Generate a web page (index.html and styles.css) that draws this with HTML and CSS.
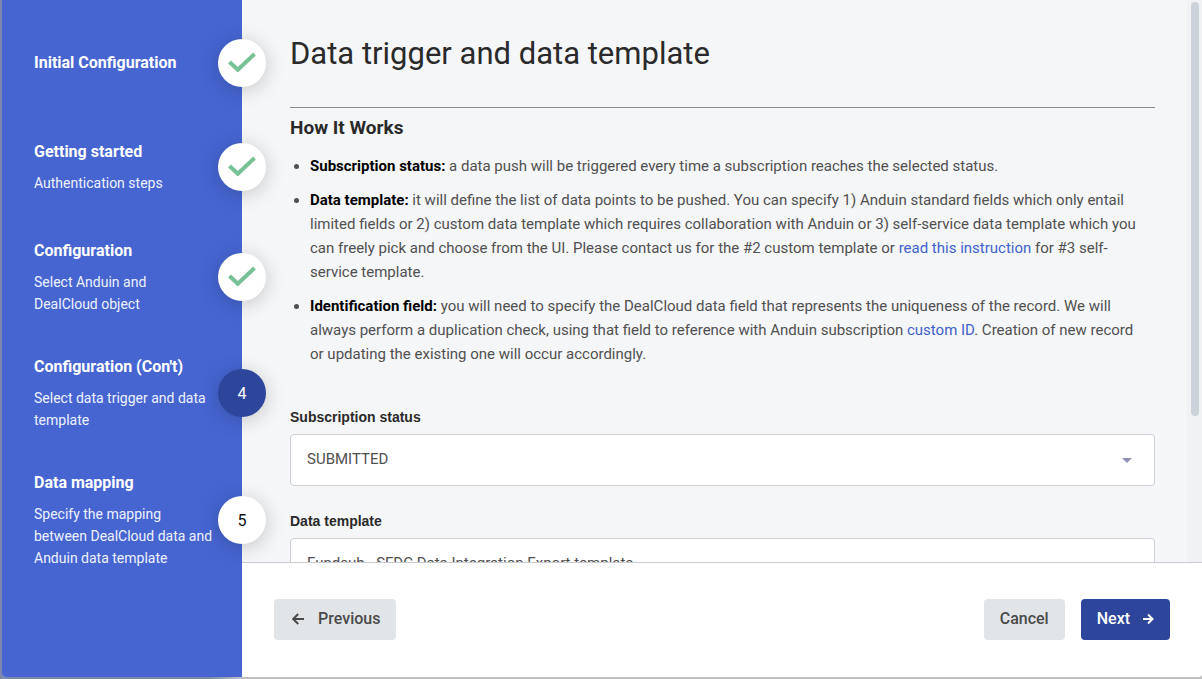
FILE: index.html
```html
<!DOCTYPE html>
<html lang="en">
<head>
<meta charset="utf-8">
<title>Data trigger and data template</title>
<link rel="stylesheet" href="styles.css">
</head>
<body>
<div class="wizard">
  <nav class="sidebar" aria-label="Setup steps">
    <ol class="steps">
      <li class="step">
        <div class="step-text"><h2 class="step-title">Initial Configuration</h2></div>
        <span class="badge"><svg class="check" viewBox="0 0 28 22" aria-label="Done"><path d="M1.500 10 9.800 17.700 26.500 2"/></svg></span>
      </li>
      <li class="step">
        <div class="step-text"><h2 class="step-title">Getting started</h2><p class="step-note">Authentication steps</p></div>
        <span class="badge"><svg class="check" viewBox="0 0 28 22" aria-label="Done"><path d="M1.500 10 9.800 17.700 26.500 2"/></svg></span>
      </li>
      <li class="step">
        <div class="step-text"><h2 class="step-title">Configuration</h2><p class="step-note">Select Anduin and<br>DealCloud object</p></div>
        <span class="badge"><svg class="check" viewBox="0 0 28 22" aria-label="Done"><path d="M1.500 10 9.800 17.700 26.500 2"/></svg></span>
      </li>
      <li class="step" aria-current="step">
        <div class="step-text"><h2 class="step-title">Configuration (Con't)</h2><p class="step-note">Select data trigger and data<br>template</p></div>
        <span class="badge badge-current">4</span>
      </li>
      <li class="step">
        <div class="step-text"><h2 class="step-title">Data mapping</h2><p class="step-note">Specify the mapping<br>between DealCloud data and<br>Anduin data template</p></div>
        <span class="badge">5</span>
      </li>
    </ol>
  </nav>
  <div class="panel">
    <div class="scroller">
      <main class="content">
        <h1 class="page-title">Data trigger and data template</h1>
        <hr class="rule">
        <h2 class="section-title">How It Works</h2>
        <ul class="notes">
          <li><strong>Subscription status:</strong> a data push will be triggered every time a subscription reaches the selected status.</li>
          <li><strong>Data template:</strong> it will define the list of data points to be pushed. You can specify 1) Anduin standard fields which only entail limited fields or 2) custom data template which requires collaboration with Anduin or 3) self-service data template which you can freely pick and choose from the UI. Please contact us for the #2 custom template or <a href="#instruction">read this instruction</a> for #3 self-service template.</li>
          <li><strong>Identification field:</strong> you will need to specify the DealCloud data field that represents the uniqueness of the record. We will always perform a duplication check, using that field to reference with Anduin subscription <a href="#custom-id">custom ID</a>. Creation of new record or updating the existing one will occur accordingly.</li>
        </ul>
        <div class="field">
          <label class="label" for="status">Subscription status</label>
          <div class="select-box">
            <select class="select" id="status"><option>SUBMITTED</option></select>
            <svg class="caret" viewBox="0 0 10 5" aria-hidden="true"><path d="M0 0h10L5 5z"/></svg>
          </div>
        </div>
        <div class="field">
          <label class="label" for="template">Data template</label>
          <div class="select-box">
            <select class="select" id="template"><option>Fundsub - SFDC Data Integration Export template</option></select>
            <svg class="caret" viewBox="0 0 10 5" aria-hidden="true"><path d="M0 0h10L5 5z"/></svg>
          </div>
        </div>
      </main>
      <div class="rail" aria-hidden="true"><div class="thumb"></div></div>
    </div>
    <footer class="footer">
      <button class="button button-back" type="button"><svg class="arrow" viewBox="0 0 12 12" aria-hidden="true"><path d="M12 6H1.500M6.200 1 1.200 6l5 5"/></svg>Previous</button>
      <button class="button" type="button">Cancel</button>
      <button class="button button-primary" type="button">Next<svg class="arrow" viewBox="0 0 12 12" aria-hidden="true"><path d="M1 6h9.500M6 1.500 10.500 6 6 10.500"/></svg></button>
    </footer>
  </div>
</div>
</body>
</html>
```
FILE: styles.css
```css
* { box-sizing: border-box; }

body {
  margin: 0;
  padding: 0 0 2px 2px;
  height: 100vh;
  background: linear-gradient(90deg, #7d86ad 0, #7d86ad 210px, #bfbfc1 240px);
  color: #505050;
  font-family: Roboto, "Liberation Sans", sans-serif;
  font-size: 15px;
}

h1, h2, p, ol, ul { margin: 0; padding: 0; }

.wizard {
  display: flex;
  height: 100%;
  border-radius: 0 0 4px 4px;
  overflow: hidden;
  background: #fff;
}

.sidebar {
  position: relative;
  z-index: 1;
  flex: 0 0 240px;
  padding: 31px 0 0 32px;
  background: #4665d1;
  color: #fff;
}

.steps {
  display: flex;
  flex-direction: column;
  gap: 40px;
  list-style: none;
}

.step {
  display: flex;
  align-items: center;
  min-height: 64px;
}

.step-text {
  flex: 1;
  display: grid;
  gap: 8px;
  white-space: nowrap;
}

.step-title { font-size: 16px; font-weight: 700; line-height: 24px; }
.step-note { font-size: 14px; line-height: 22px; color: #eef2fd; }

.badge {
  display: grid;
  place-items: center;
  flex: 0 0 48px;
  height: 48px;
  margin-right: -24px;
  border-radius: 50%;
  background: #fff;
  color: #111;
  font-size: 16px;
  box-shadow: 0 3px 20px rgba(0, 0, 0, 0.2);
}

.badge-current { background: #2d469c; color: #fff; }

.check {
  width: 28px;
  height: 22px;
  fill: none;
  stroke: #76c195;
  stroke-width: 4;
}

.panel {
  flex: 1;
  min-width: 0;
  display: flex;
  flex-direction: column;
}

.scroller {
  flex: 1;
  min-height: 0;
  display: flex;
  background: #f5f6f8;
}

.content {
  flex: 1;
  overflow-y: auto;
  scrollbar-width: none;
  padding: 32px 32px 112px 48px;
}

.rail {
  flex: 0 0 15px;
  padding: 2px 3px 0 4px;
  background: #f1f2f4;
}

.thumb {
  height: 74%;
  border-radius: 4px;
  background: #cdd3da;
}

.page-title {
  color: #2a2a2a;
  font-size: 31px;
  font-weight: 400;
  line-height: 44px;
}

.rule {
  margin: 31px 0 8px;
  border: 0;
  border-top: 1px solid #8a8b8d;
}

.section-title { color: #2a2a2a; font-size: 19px; font-weight: 700; line-height: 24px; }

.notes {
  display: grid;
  gap: 10px;
  margin: 14px 0 40px;
  padding: 0 8px 0 20px;
  line-height: 24px;
}

.notes strong { color: #000; }
.notes a { color: #3f62cc; text-decoration: none; }

.field { margin-bottom: 24px; }

.label {
  display: block;
  margin-bottom: 6px;
  color: #2a2a2a;
  font-family: "Liberation Sans", Arial, sans-serif;
  font-size: 14px;
  font-weight: 700;
  line-height: 22px;
}

.select-box { position: relative; }

.select {
  display: block;
  width: 100%;
  height: 52px;
  padding: 0 48px 2px 16px;
  appearance: none;
  border: 1px solid #cdcfd5;
  border-radius: 4px;
  background: #fff;
  color: #4f4f4f;
  font: inherit;
}

.caret {
  position: absolute;
  top: 24px;
  right: 23px;
  width: 10px;
  height: 5px;
  fill: #908fb5;
  pointer-events: none;
}

.footer {
  display: flex;
  gap: 16px;
  padding: 36px 32px 37px;
  border-top: 1px solid #cbccd3;
  background: #fff;
}

.button {
  display: flex;
  align-items: center;
  gap: 14px;
  height: 41px;
  padding: 0 16px 1px;
  border: 0;
  border-radius: 4px;
  background: #e1e5e8;
  color: #4a4a4a;
  font: 500 16px/24px Roboto, "Liberation Sans", sans-serif;
}

.button-back { margin-right: auto; padding-left: 18px; }
.button-primary { gap: 12px; background: #2d469c; color: #fff; }

.arrow {
  width: 12px;
  height: 12px;
  fill: none;
  stroke: currentColor;
  stroke-width: 2;
}
```
